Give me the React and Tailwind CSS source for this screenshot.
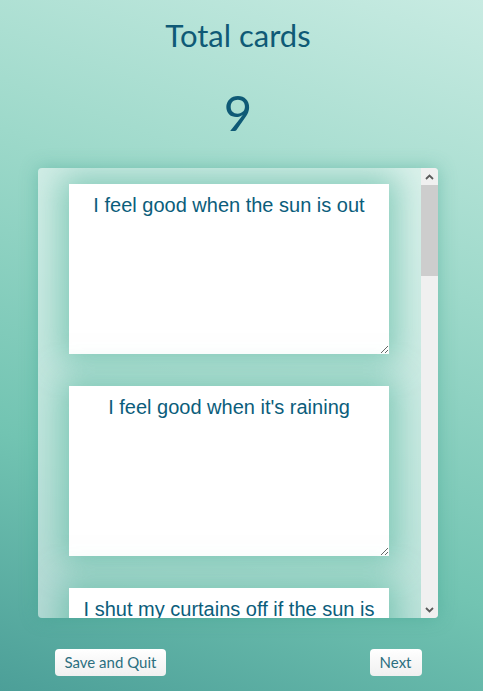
import React from 'react';

const cards = [
  'I feel good when the sun is out',
  "I feel good when it's raining",
  'I shut my curtains off if the sun is out',
  'I like walking in the rain',
  'I feel tired when it is cloudy',
  'I go outside when it is sunny',
  'I stay in when it is cold',
  'I enjoy snowy days',
  'I sleep better when it is windy',
];

const Chevron = ({ up }) => (
  <svg width="9" height="6" viewBox="0 0 9 6" className="text-[#5a5a5a]">
    <path
      d={up ? 'M1 5 L4.5 1.5 L8 5' : 'M1 1 L4.5 4.5 L8 1'}
      fill="none"
      stroke="currentColor"
      strokeWidth="1.8"
    />
  </svg>
);

const App = () => {
  return (
    <div className="h-[691px] w-full pr-[7px] bg-[linear-gradient(200deg,#c8ebe2_0%,#9dd9ca_35%,#72c4b2_70%,#4c9f98_100%)] flex flex-col items-center font-['Lato',sans-serif] text-[#0f5a76] overflow-hidden">
      <h1 className="mt-[15px] text-[31px] leading-[40px] font-normal">Total cards</h1>
      <div className="mt-[29px] text-[49px] leading-[56px]">{cards.length}</div>

      {/* Card list with scrollbar */}
      <div className="mt-[28px] w-[400px] h-[450px] rounded-[4px] bg-white/55 shadow-[0_0_18px_rgba(60,160,140,0.45)] flex overflow-hidden">
        <div className="flex-1 overflow-y-scroll [scrollbar-width:none]">
          <div className="flex flex-col items-start pl-[31px] gap-[32px] pt-[16px] pb-[250px]">
            {cards.map((text) => (
              <textarea
                key={text}
                readOnly
                defaultValue={text}
                className="w-[320px] h-[170px] shrink-0 bg-white px-[12px] pt-[10px] text-center text-[20px] leading-[23px] font-['Arial','Liberation_Sans',sans-serif] text-[#0b5d7b] shadow-[0_0_30px_8px_rgba(80,180,155,0.6)] outline-none resize"
              />
            ))}
          </div>
        </div>
        <div className="w-[17px] h-full bg-[#f0f0f0] flex flex-col items-center">
          <div className="h-[17px] w-full flex items-center justify-center">
            <Chevron up />
          </div>
          <div className="w-full h-[91px] bg-[#cdcdcd]" />
          <div className="flex-1" />
          <div className="h-[17px] w-full flex items-center justify-center">
            <Chevron />
          </div>
        </div>
      </div>

      {/* Actions */}
      <div className="mt-[31px] w-[367px] flex justify-between">
        <button className="h-[27px] px-[10px] rounded-[4px] bg-gradient-to-b from-white to-[#f0f0f0] text-[15px] text-[#2c6f80] font-['Lato',sans-serif]">
          Save and Quit
        </button>
        <button className="h-[27px] px-[10px] rounded-[4px] bg-gradient-to-b from-white to-[#f0f0f0] text-[15px] text-[#2c6f80] font-['Lato',sans-serif]">
          Next
        </button>
      </div>
    </div>
  );
};

export default App;
